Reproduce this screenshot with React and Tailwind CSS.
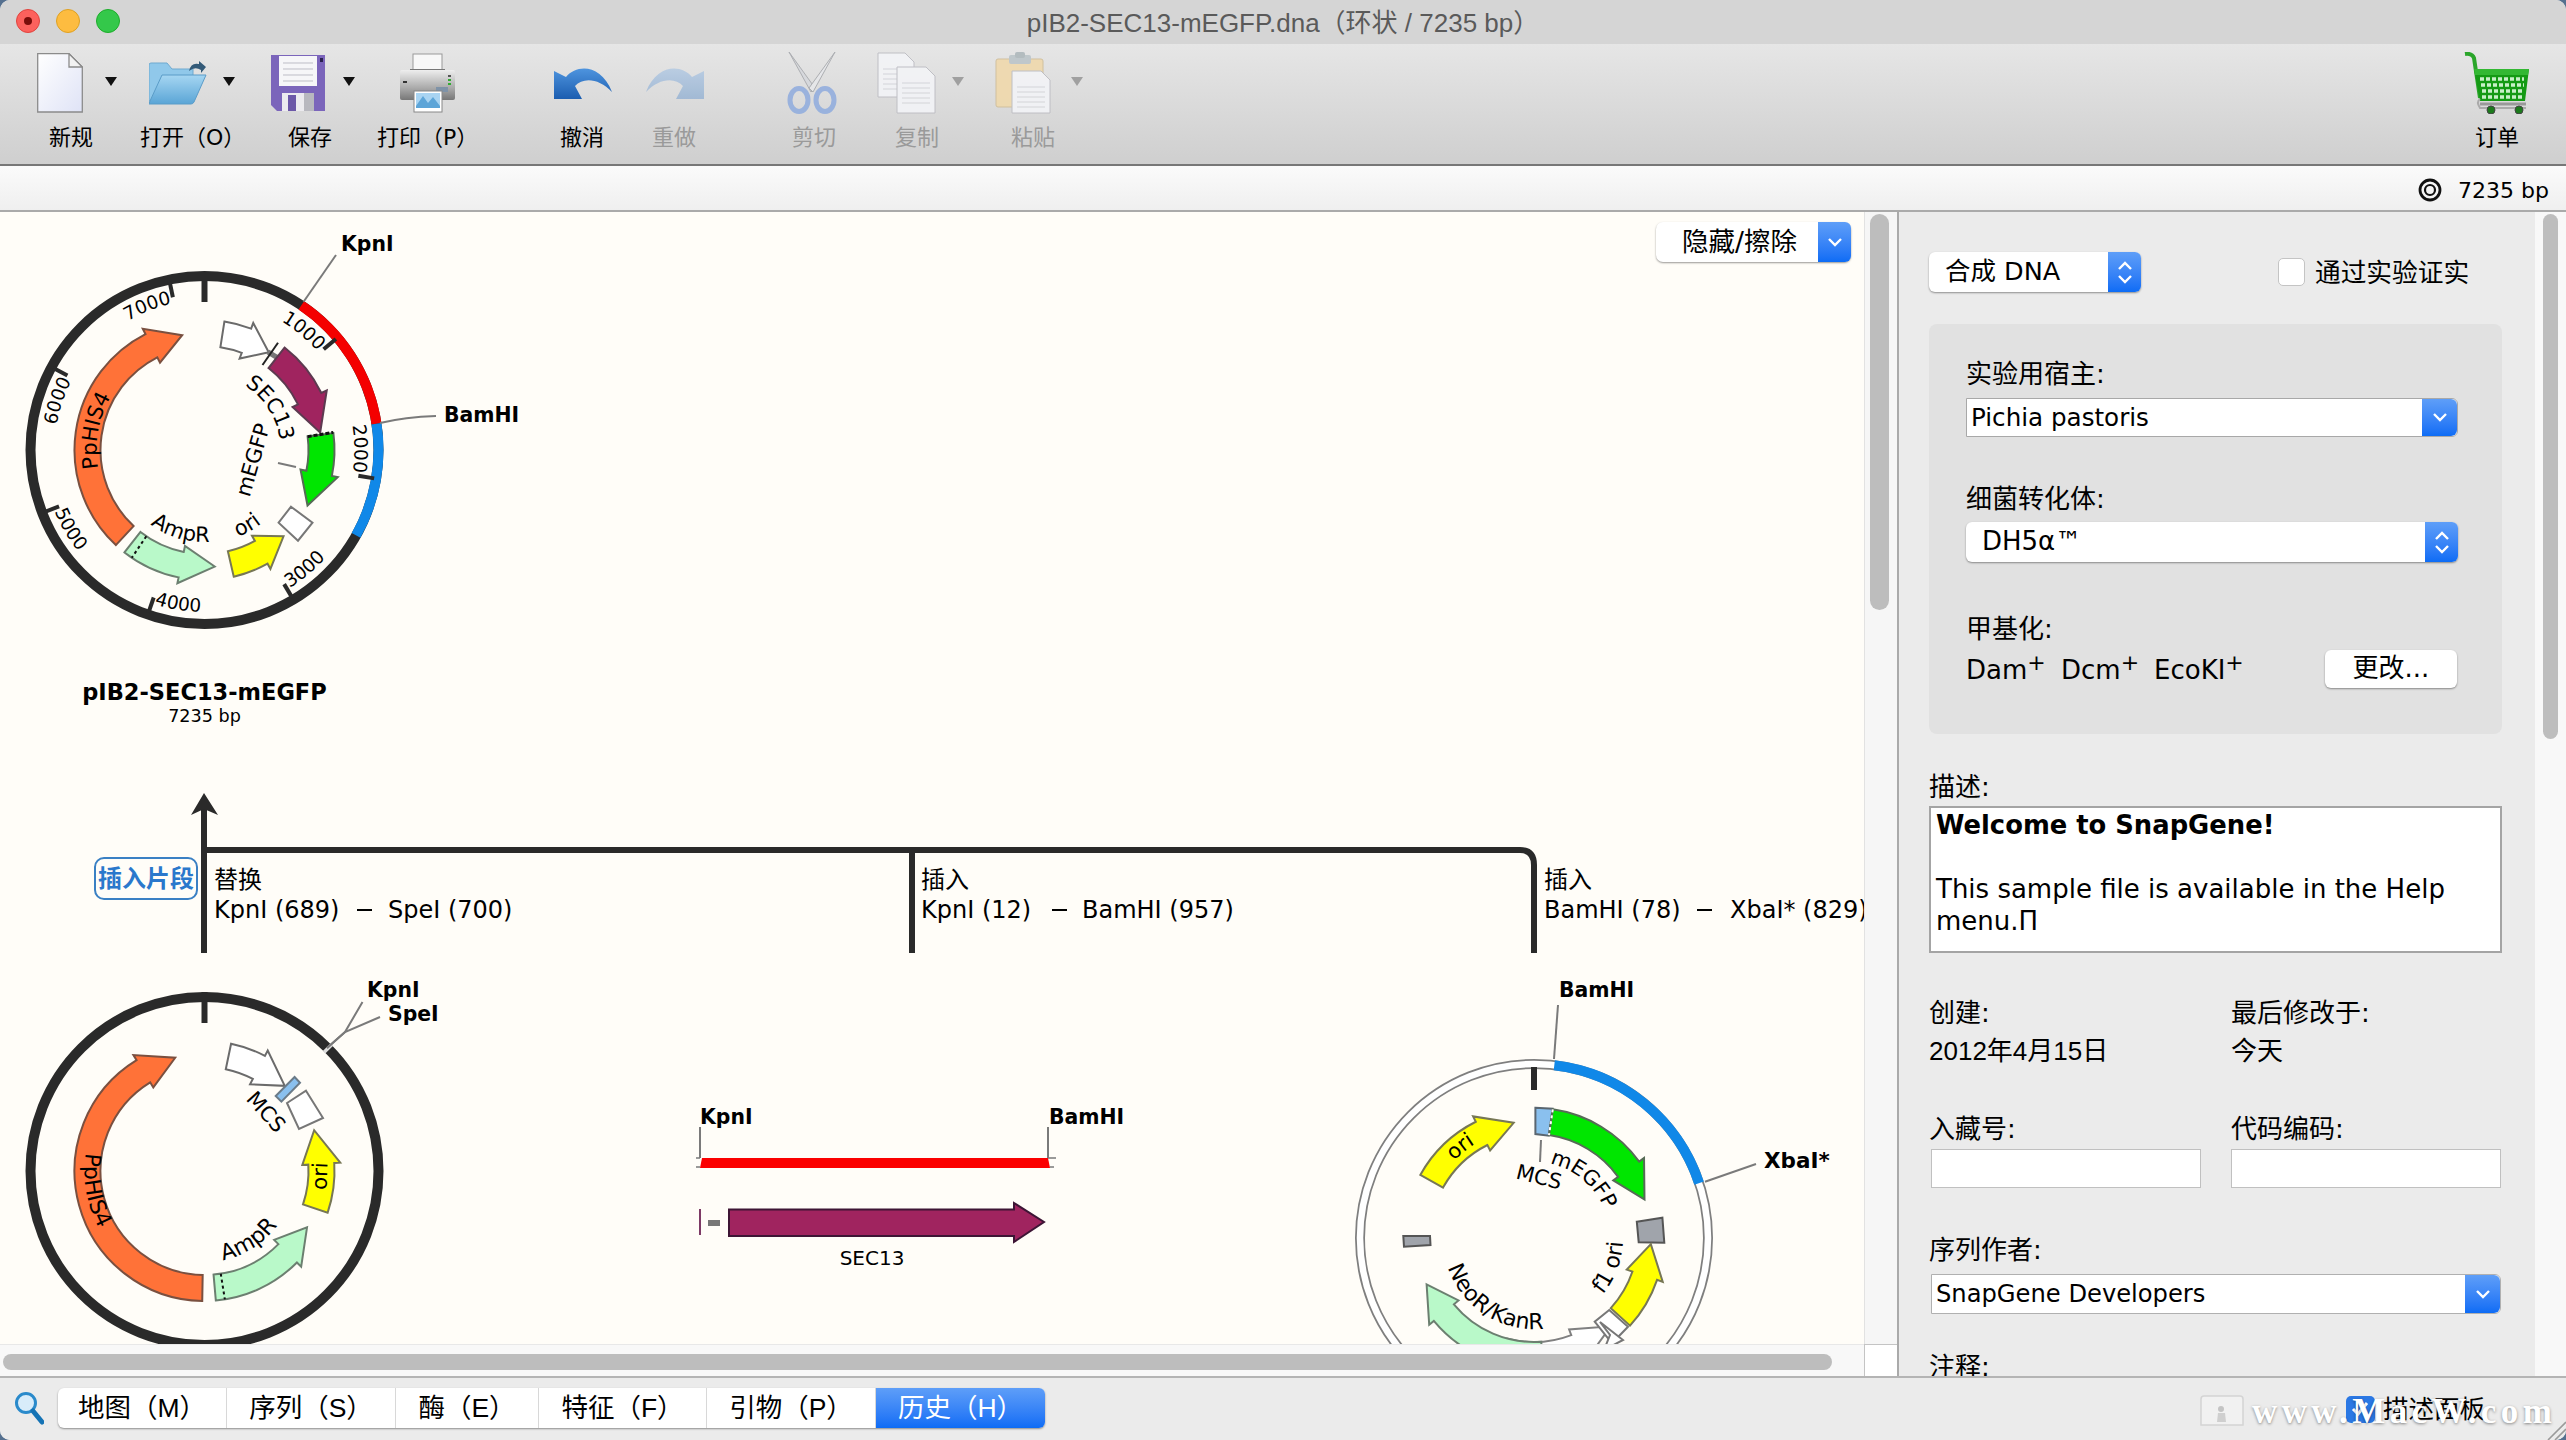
import React from "react";

const rad = (a) => (a * Math.PI) / 180;
const pt = (cx, cy, r, a) => [cx + r * Math.sin(rad(a)), cy - r * Math.cos(rad(a))];
const f = (p) => `${p[0].toFixed(2)} ${p[1].toFixed(2)}`;
const arcD = (cx, cy, r, a0, a1) => {
  const large = Math.abs(a1 - a0) > 180 ? 1 : 0;
  const sweep = a1 > a0 ? 1 : 0;
  return `M${f(pt(cx, cy, r, a0))} A${r} ${r} 0 ${large} ${sweep} ${f(pt(cx, cy, r, a1))}`;
};
const arrowD = (cx, cy, ro, ri, a0, tip, hs, wing = 6) => {
  const large = Math.abs(hs - a0) > 180 ? 1 : 0;
  const s = tip > a0 ? 1 : 0;
  const rm = (ro + ri) / 2;
  return (
    `M${f(pt(cx, cy, ro, a0))} A${ro} ${ro} 0 ${large} ${s} ${f(pt(cx, cy, ro, hs))}` +
    ` L${f(pt(cx, cy, ro + wing, hs))} L${f(pt(cx, cy, rm, tip))} L${f(pt(cx, cy, ri - wing, hs))} L${f(pt(cx, cy, ri, hs))}` +
    ` A${ri} ${ri} 0 ${large} ${1 - s} ${f(pt(cx, cy, ri, a0))} Z`
  );
};

const C = { orange: "#ff7238", purple: "#a0245f", green: "#00e600", yellow: "#ffff00", mint: "#b9f9c9", white: "#ffffff" };
const Feat = ({ c, fill, stroke = "#6b6b6b", a }) => (
  <path d={arrowD(c[0], c[1], 130, 104, a[0], a[1], a[2])} fill={fill} stroke={stroke} strokeWidth="2" strokeLinejoin="miter" />
);
const ArcText = ({ c, r, a0, a1, size = 21, anchor = "middle", children, fill = "#000" }) => {
  const id = `arc-${Math.round(c[0])}-${Math.round(c[1])}-${Math.round(a0)}-${Math.round(a1)}-${r}`;
  const off = anchor === "middle" ? "50%" : anchor === "end" ? "100%" : "0%";
  return (
    <>
      <path id={id} d={arcD(c[0], c[1], r, a0, a1)} fill="none" stroke="none" />
      <text fontSize={size} fill={fill}>
        <textPath href={`#${id}`} startOffset={off} textAnchor={anchor}>{children}</textPath>
      </text>
    </>
  );
};
const Poly = ({ p, fill = "#fff", stroke = "#777", w = 2 }) => <polygon points={p} fill={fill} stroke={stroke} strokeWidth={w} />;
const Bold = ({ x, y, children, size = 20.4 }) => (
  <text x={x} y={y} fontSize={size} fontWeight="700" dominantBaseline="central" fill="#000">{children}</text>
);
const Ln = ({ d, s = "#7a7a7a", w = 2 }) => <path d={d} fill="none" stroke={s} strokeWidth={w} />;

function Plasmid1() {
  const c = [204.5, 450];
  const ticks = [[49.8, "1000", 1], [99.5, "2000", 1], [149.3, "3000", 0], [199, "4000", 0], [248.8, "5000", 0], [298.5, "6000", 1], [348.3, "7000", 1]];
  return (
    <g>
      <circle cx={c[0]} cy={c[1]} r="174" fill="none" stroke="#2a2a2a" strokeWidth="10" />
      <path d={arcD(c[0], c[1], 174, 33.8, 81.3)} fill="none" stroke="#f40000" strokeWidth="10" />
      <path d={arcD(c[0], c[1], 174, 81.3, 119.4)} fill="none" stroke="#1088e8" strokeWidth="10" />
      <Ln d="M204.5 272V302" s="#2a2a2a" w="6" />
      {ticks.map(([a, t, cw]) => (
        <g key={t}>
          <Ln d={`M${f(pt(c[0], c[1], 172, a))} L${f(pt(c[0], c[1], 156, a))}`} s="#2a2a2a" w="4" />
          {cw ? (
            <ArcText c={c} r={150} a0={a - 60} a1={a - 1} size={18.5} anchor="end">{t}</ArcText>
          ) : (
            <ArcText c={c} r={162} a0={a - 1} a1={a - 60} size={18.5} anchor="start">{t}</ArcText>
          )}
        </g>
      ))}
      <Feat c={c} fill={C.orange} stroke="#7a5040" a={[223, 349, 333]} />
      <Feat c={c} fill={C.white} a={[8.8, 33.3, 21]} />
      <Ln d="M268 352L278 358" s="#777" w="5" />
      <Ln d="M278 342.7L262.5 365" s="#222" w="2" />
      <Feat c={c} fill={C.purple} stroke="#5d3a50" a={[38, 81.4, 64]} />
      <Feat c={c} fill={C.green} stroke="#566b56" a={[82.5, 118.3, 101.5]} />
      <path d={`M${f(pt(c[0], c[1], 104, 82.6))} L${f(pt(c[0], c[1], 130, 82.2))}`} stroke="#111" strokeWidth="3" strokeDasharray="4 2" />
      <Poly p="291,506.7 312.5,522.7 298,540.7 278.6,522.7" />
      <Feat c={c} fill={C.yellow} stroke="#777755" a={[167, 137.5, 151]} />
      <Feat c={c} fill={C.mint} stroke="#6c7f70" a={[218, 175, 191.5]} />
      <path d={`M${f(pt(c[0], c[1], 104, 214))} L${f(pt(c[0], c[1], 130, 214))}`} stroke="#111" strokeWidth="2" strokeDasharray="3 3" />
      <ArcText c={c} r={108} a0={215} a1={345}>PpHIS4</ArcText>
      <ArcText c={c} r={76} a0={0} a1={115}>SEC13</ArcText>
      <text transform="translate(253 460) rotate(-74)" fontSize="21" textAnchor="middle" dominantBaseline="central">mEGFP</text>
      <ArcText c={c} r={92} a0={240} a1={153}>AmpR</ArcText>
      <ArcText c={c} r={93} a0={195} a1={106}>ori</ArcText>
      <Ln d="M278 463L296 467" />
      <Ln d="M303.6 301.7L336 255" />
      <Ln d="M380 423Q405 417 436 416" />
      <Bold x={341} y={244}>KpnI</Bold>
      <Bold x={444} y={415}>BamHI</Bold>
      <text x={204.5} y={692} fontSize="22.5" fontWeight="700" textAnchor="middle" dominantBaseline="central">pIB2-SEC13-mEGFP</text>
      <text x={204.5} y={716} fontSize="17.6" textAnchor="middle" dominantBaseline="central">7235 bp</text>
    </g>
  );
}

function Plasmid2() {
  const c = [204.5, 1171];
  return (
    <g>
      <circle cx={c[0]} cy={c[1]} r="174" fill="none" stroke="#2a2a2a" strokeWidth="10" />
      <Ln d="M204.5 992V1023" s="#2a2a2a" w="6" />
      <path d={arcD(c[0], c[1], 174, 44.6, 45.8)} fill="none" stroke="#ddd" strokeWidth="11" />
      <Ln d="M327 1048L345 1032L362.5 1002" />
      <Ln d="M327 1048L345 1032L380 1017" />
      <Bold x={367} y={990}>KpnI</Bold>
      <Bold x={388} y={1014}>SpeI</Bold>
      <Feat c={c} fill={C.orange} stroke="#7a5040" a={[181, 345.5, 328.5]} />
      <Feat c={c} fill={C.white} a={[11.8, 43.3, 27.7]} />
      <Poly p="294.6,1077 300,1082.7 281.4,1101.7 275.7,1096" fill="#8ac0ee" stroke="#6b7b88" />
      <Poly p="306,1090.7 323,1118 299,1129 287,1103" />
      <text transform="translate(266 1112) rotate(48)" fontSize="21" textAnchor="middle" dominantBaseline="central">MCS</text>
      <Feat c={c} fill={C.yellow} stroke="#777755" a={[108.7, 69.6, 86.5]} />
      <text transform="translate(320 1176) rotate(-88)" fontSize="21" textAnchor="middle" dominantBaseline="central">ori</text>
      <Feat c={c} fill={C.mint} stroke="#6c7f70" a={[175, 118.8, 134.7]} />
      <path d={`M${f(pt(c[0], c[1], 104, 171))} L${f(pt(c[0], c[1], 130, 171))}`} stroke="#111" strokeWidth="2" strokeDasharray="3 3" />
      <ArcText c={c} r={120} a0={325} a1={195} size={22}>PpHIS4</ArcText>
      <ArcText c={c} r={91} a0={195} a1={100} size={22}>AmpR</ArcText>
    </g>
  );
}

function Plasmid3() {
  const c = [1534, 1238];
  return (
    <g>
      <circle cx={c[0]} cy={c[1]} r="174" fill="none" stroke="#7f7f7f" strokeWidth="10" />
      <circle cx={c[0]} cy={c[1]} r="174" fill="none" stroke="#ffffff" strokeWidth="6.5" />
      <path d={arcD(c[0], c[1], 174, 6.7, 71.6)} fill="none" stroke="#1088e8" strokeWidth="10" />
      <Ln d="M1534 1067V1090" s="#2a2a2a" w="6" />
      <Ln d="M1554 1059L1558 1005" />
      <Ln d="M1705 1181.7L1756 1164" />
      <Bold x={1559} y={990}>BamHI</Bold>
      <Bold x={1764} y={1160} size={21.5}>XbaI*</Bold>
      <Poly p="1535.4,1107.7 1552.6,1108.7 1548.8,1135.7 1535.4,1134" fill="#8ac0ee" stroke="#5a6670" />
      <Feat c={c} fill={C.green} stroke="#566b56" a={[8.3, 70.8, 54]} />
      <path d={`M${f(pt(c[0], c[1], 130, 8.3))} L${f(pt(c[0], c[1], 104, 8.3))}`} stroke="#fff" strokeWidth="2" strokeDasharray="3 3" />
      <Ln d="M1541 1140L1540 1162" />
      <text transform="translate(1539 1177) rotate(14)" fontSize="21" textAnchor="middle" dominantBaseline="central">MCS</text>
      <ArcText c={c} r={76} a0={-5} a1={85}>mEGFP</ArcText>
      <Feat c={c} fill={C.yellow} stroke="#777755" a={[299, 350, 333.4]} />
      <ArcText c={c} r={111} a0={275} a1={367}>ori</ArcText>
      <Poly p="1636.8,1221.7 1662.4,1217.7 1664.3,1242.7 1638.7,1242.3" fill="#a0a4ab" stroke="#555" />
      <Poly p="1403.3,1236 1430,1236 1430.5,1245 1404,1246.7" fill="#a0a4ab" stroke="#555" />
      <Feat c={c} fill={C.yellow} stroke="#777755" a={[132.4, 93, 108.8]} />
      <ArcText c={c} r={89} a0={160} a1={62} size={22}>f1 ori</ArcText>
      <path d={arrowD(c[0], c[1], 130, 104, 195, 139, 159, 6)} fill="#fff" stroke="#808080" strokeWidth="2" />
      <Poly p="1609.2,1310 1628,1326.7 1612,1343.3 1594.7,1321.7" />
      <Poly p="1600,1322 1623,1340 1604,1350 1610,1335" />
      <Feat c={c} fill={C.mint} stroke="#6c7f70" a={[176, 246.6, 230.4]} />
      <ArcText c={c} r={91} a0={285} a1={140} size={22}>NeoR/KanR</ArcText>
    </g>
  );
}

function Middle() {
  return (
    <g>
      <Bold x={700} y={1117}>KpnI</Bold>
      <Bold x={1049} y={1117}>BamHI</Bold>
      <Ln d="M700 1127V1158M1048 1127V1158" />
      <Ln d="M696 1158H700M1048 1158H1056M696 1167H700M1050 1167H1054" w="1.5" />
      <polygon points="702,1158 1048,1158 1050,1168 700,1168" fill="#fb0000" />
      <Ln d="M700 1209V1235" s="#7d3a66" w="2" />
      <rect x="708" y="1220" width="12" height="6" fill="#777" />
      <polygon points="729,1209.5 1014,1209.5 1014,1203 1044,1222 1014,1242 1014,1236 729,1236" fill="#a0245f" stroke="#3d1535" strokeWidth="2" />
      <text x={872} y={1258} fontSize="20" textAnchor="middle" dominantBaseline="central">SEC13</text>
    </g>
  );
}

function Tree() {
  const dash = (x1, x2, y) => <path d={`M${x1} ${y}H${x2}`} stroke="#000" strokeWidth="2" />;
  const T = ({ x, y, children }) => <text x={x} y={y} fontSize="24" dominantBaseline="central">{children}</text>;
  return (
    <g>
      <path d="M204 953V808" stroke="#2a2a2a" strokeWidth="6" fill="none" />
      <polygon points="204,793 218,815 204,809 191,815" fill="#2a2a2a" />
      <path d="M204 850H1520Q1534 850 1534 865V953" stroke="#2a2a2a" strokeWidth="6" fill="none" />
      <path d="M912 850V953" stroke="#2a2a2a" strokeWidth="6" fill="none" />
      <rect x="95" y="858" width="102" height="41" rx="9" fill="#fffdf8" stroke="#3a80c4" strokeWidth="2" />
      <text x="146" y="879" fontSize="24" fontWeight="700" fill="#2a78cc" textAnchor="middle" dominantBaseline="central">插入片段</text>
      <T x={214} y={880}>替换</T>
      <T x={214} y={910}>KpnI (689)</T>
      {dash(357, 372, 910)}
      <T x={388} y={910}>SpeI (700)</T>
      <T x={921} y={880}>插入</T>
      <T x={921} y={910}>KpnI (12)</T>
      {dash(1052, 1067, 910)}
      <T x={1082} y={910}>BamHI (957)</T>
      <T x={1544} y={880}>插入</T>
      <T x={1544} y={910}>BamHI (78)</T>
      {dash(1697, 1712, 910)}
      <T x={1730} y={910}>XbaI* (829)</T>
    </g>
  );
}

/* ---------- toolbar icons ---------- */
const IDoc = () => (
  <svg width="46" height="60" viewBox="0 0 46 60">
    <defs><linearGradient id="dg" x1="0" y1="0" x2="1" y2="1"><stop offset="0" stopColor="#fff" /><stop offset="1" stopColor="#dfe3f6" /></linearGradient></defs>
    <path d="M.7 .7H32L45.3 14V59H.7Z" fill="url(#dg)" stroke="#8b8b8b" strokeWidth="1.3" />
    <path d="M32 .7V14H45.3Z" fill="#f2f2f2" stroke="#8b8b8b" strokeWidth="1.3" />
  </svg>
);
const IFolder = () => (
  <svg width="58" height="44" viewBox="0 0 58 44">
    <defs><linearGradient id="fg" x1="0" y1="0" x2="0" y2="1"><stop offset="0" stopColor="#a6d6f2" /><stop offset="1" stopColor="#5aa5d6" /></linearGradient></defs>
    <path d="M0 4Q0 2 2 2H18L23 8H44V40H0Z" fill="#90c8ea" stroke="#6fa9cf" />
    <path d="M13 14H57L45 41Q44 43 42 43H0L1 40Z" fill="url(#fg)" stroke="#5b9cc8" />
    <path d="M40 10Q42 1 50 3L50 0L57 6L52 12L52 9Q46 5 40 10Z" fill="#335a78" />
  </svg>
);
const ISave = () => (
  <svg width="54" height="56" viewBox="0 0 54 56">
    <path d="M0 0H54V56H6L0 50Z" fill="#7b65bb" />
    <rect x="8" y="1" width="38" height="30" fill="#f6f6f8" />
    <path d="M12 8H42M12 14H42M12 20H42M12 26H42" stroke="#bdbdc6" strokeWidth="1" />
    <rect x="49" y="3" width="3" height="4" fill="#2a2050" />
    <rect x="11" y="38" width="32" height="18" fill="#ecebef" />
    <rect x="17" y="40" width="8" height="16" fill="#6c58a8" />
    <rect x="33" y="38" width="10" height="18" fill="#b8b8bf" />
  </svg>
);
const IPrinter = () => (
  <svg width="55" height="60" viewBox="0 0 55 60">
    <defs><linearGradient id="pg" x1="0" y1="0" x2="0" y2="1"><stop offset="0" stopColor="#eeeeee" /><stop offset=".6" stopColor="#aaaaaa" /><stop offset="1" stopColor="#777" /></linearGradient></defs>
    <rect x="13" y="1" width="29" height="16" fill="#f8f8f8" stroke="#999" />
    <path d="M10 16H45V20H10Z" fill="#777" />
    <rect x="0" y="17" width="55" height="30" rx="2" fill="url(#pg)" />
    <rect x="3" y="28" width="4" height="2" fill="#333" />
    <rect x="48" y="22" width="3" height="2" fill="#555" /><rect x="48" y="26" width="3" height="2" fill="#3a3" /><rect x="48" y="30" width="3" height="2" fill="#3a3" />
    <rect x="36" y="34" width="12" height="5" fill="#7f93a8" />
    <rect x="14" y="38" width="28" height="21" fill="#fff" stroke="#888" />
    <rect x="16" y="40" width="24" height="15" fill="#a9d4f2" />
    <path d="M16 53L23 43L28 50L33 44L40 53V55H16Z" fill="#5da5d8" />
  </svg>
);
const IUndo = ({ redo, c1, c2, id }) => (
  <svg width="60" height="34" viewBox="0 0 60 34" style={redo ? { transform: "scaleX(-1)" } : undefined}>
    <defs><linearGradient id={id} x1="0" y1="0" x2="0" y2="1"><stop offset="0" stopColor={c1} /><stop offset="1" stopColor={c2} /></linearGradient></defs>
    <path d="M1 5L13 11C24 -2 48 -2 59 26C46 12 30 11 22 20L29 33H1Z" fill={`url(#${id})`} />
  </svg>
);
const IScissors = () => (
  <svg width="56" height="62" viewBox="0 0 56 62">
    <path d="M4 0L30 36L26 40Z" fill="#d6d8dc" stroke="#a7a9ad" />
    <path d="M50 0L24 36L28 40Z" fill="#e6e7ea" stroke="#a7a9ad" />
    <ellipse cx="14" cy="48" rx="9" ry="11.5" fill="none" stroke="#93aede" strokeWidth="5" />
    <ellipse cx="40" cy="48" rx="9" ry="11.5" fill="none" stroke="#93aede" strokeWidth="5" />
  </svg>
);
const IPage = ({ x, y, w, h }) => (
  <g>
    <path d={`M${x} ${y}H${x + w - 9}L${x + w} ${y + 9}V${y + h}H${x}Z`} fill="#f3f4f7" stroke="#bcbcc2" />
    <path d={`M${x + 5} ${y + 16}H${x + w - 5}M${x + 5} ${y + 21}H${x + w - 5}M${x + 5} ${y + 26}H${x + w - 5}M${x + 5} ${y + 31}H${x + w - 5}M${x + 5} ${y + 36}H${x + w - 5}`} stroke="#d2d3d8" />
  </g>
);
const ICopy = () => (
  <svg width="60" height="62" viewBox="0 0 60 62">
    <IPage x={1} y={1} w={36} h={44} />
    <IPage x={20} y={15} w={38} h={46} />
  </svg>
);
const IPaste = () => (
  <svg width="58" height="62" viewBox="0 0 58 62">
    <rect x="1" y="7" width="47" height="48" rx="2" fill="#f0d9ac" stroke="#cfbd98" />
    <rect x="14" y="3" width="22" height="9" rx="2" fill="#bcc5c9" />
    <rect x="20" y="0" width="10" height="6" rx="2" fill="#aeb8bc" />
    <IPage x={17} y={19} w={38} h={42} />
  </svg>
);
const ICart = () => (
  <svg width="66" height="62" viewBox="0 0 66 62">
    <path d="M1 2Q8 1 10 6L16 46" fill="none" stroke="#2aa52a" strokeWidth="4" />
    <path d="M10 17H65L61 49H16Z" fill="#149a14" />
    <path d="M10 17H65L64 23H11Z" fill="#33b833" />
    <path d="M16 27H60M17 33H60M18 39H60M18 45H59" stroke="#c8f0c8" strokeWidth="3.5" strokeDasharray="4 2" />
    <path d="M16 52H62" stroke="#999" strokeWidth="3" />
    <path d="M16 47Q12 50 16 56H62" fill="none" stroke="#aaa" strokeWidth="2" />
    <circle cx="27" cy="58" r="4" fill="#1c7a1c" stroke="#444" />
    <circle cx="55" cy="58" r="4" fill="#1c7a1c" stroke="#444" />
  </svg>
);
const Caret = ({ dim }) => (
  <svg width="12" height="9" viewBox="0 0 12 9" className="shrink-0"><path d="M0 0H12L6 9Z" fill={dim ? "#9a9a9a" : "#111"} /></svg>
);

/* ---------- form bits ---------- */
const Chev = ({ up }) => (
  <svg width="16" height="9" viewBox="0 0 16 9"><path d={up ? "M2 8L8 2L14 8" : "M2 1L8 7L14 1"} fill="none" stroke="#fff" strokeWidth="2.4" /></svg>
);
const Blue = ({ w, double }) => (
  <div className={`${w} h-full shrink-0 flex flex-col items-center justify-center gap-[5px] rounded-r-[6px] bg-gradient-to-b from-[#5e9ef8] to-[#0c6cf5]`}>
    {double ? <Chev up /> : null}
    <Chev />
  </div>
);

export default function App() {
  const tools = [
    { w: "w-[114px]", pl: "pl-[23px]", icon: <IDoc />, cm: "ml-[22px]", caret: 1, label: "新规" },
    { w: "w-[112px]", pl: "pl-[21px]", icon: <IFolder />, cm: "ml-[16px]", caret: 1, label: "打开（O）", lb: "pl-[12px]" },
    { w: "w-[140px]", pl: "pl-[31px]", icon: <ISave />, cm: "ml-[18px]", caret: 1, label: "保存" },
    { w: "w-[80px]", pl: "pl-[20px]", icon: <IPrinter />, label: "打印（P）", mr: "mr-[78px]", lb: "-translate-x-[3px]" },
    { w: "w-[88px]", pl: "pl-[15px]", icon: <IUndo c1="#4e94de" c2="#1b5db0" id="ug1" />, label: "撤消" },
    { w: "w-[96px]", pl: "pl-[19px]", icon: <IUndo redo c1="#b6cbe2" c2="#9cb6d4" id="ug2" />, label: "重做", dim: 1, mr: "mr-[50px]" },
    { w: "w-[84px]", pl: "pl-[13px]", icon: <IScissors />, label: "剪切", dim: 1 },
    { w: "w-[122px]", pl: "pl-[21px]", icon: <ICopy />, cm: "ml-[15px]", caret: 1, label: "复制", dim: 1 },
    { w: "w-[110px]", pl: "pl-[17px]", icon: <IPaste />, cm: "ml-[18px]", caret: 1, label: "粘贴", dim: 1 },
  ];
  const tabs = [
    ["地图（M）", "w-[169px]"],
    ["序列（S）", "w-[169px]"],
    ["酶（E）", "w-[143px]"],
    ["特征（F）", "w-[168px]"],
    ["引物（P）", "w-[169px]"],
  ];
  const label = "h-[30px] leading-[32px] text-[26px] text-black whitespace-nowrap";
  return (
    <div className="w-[2566px] h-[1440px] bg-[#55708f]">
      <div className="w-full h-full rounded-[10px] overflow-hidden flex flex-col relative bg-[#ebebeb] font-['DejaVu_Sans','Noto_Sans_CJK_SC',sans-serif]">
        {/* title bar */}
        <div className="h-[44px] shrink-0 relative flex items-center justify-center pt-[2px] bg-[#d5d5d5] text-[#5a5a5a] text-[26px] font-['Liberation_Sans','Noto_Sans_CJK_SC',sans-serif]">
          <div className="absolute left-[16px] top-[9px] flex gap-[16px]">
            <div className="w-[24px] h-[24px] rounded-full bg-[#fc615d] border border-[#e0443e] flex items-center justify-center"><div className="w-[8px] h-[8px] rounded-full bg-[#7a0d0a]" /></div>
            <div className="w-[24px] h-[24px] rounded-full bg-[#fdbc40] border border-[#dea123]" />
            <div className="w-[24px] h-[24px] rounded-full bg-[#34c84a] border border-[#1dad2b]" />
          </div>
          <span>pIB2-SEC13-mEGFP.dna（环状 / 7235 bp）</span>
        </div>
        {/* toolbar */}
        <div className="h-[122px] shrink-0 flex pl-[14px] pr-[36px] border-b-2 border-[#777] bg-gradient-to-b from-[#e6e6e6] to-[#cfcfcf]">
          {tools.map((t) => (
            <div key={t.label} className={`${t.w} ${t.mr || ""} shrink-0 flex flex-col`}>
              <div className={`h-[78px] shrink-0 flex items-center ${t.pl} ${t.dim ? "opacity-90" : ""}`}>
                <div className="shrink-0">{t.icon}</div>
                {t.caret ? <div className={`${t.cm} -mt-[4px]`}><Caret dim={t.dim} /></div> : null}
              </div>
              <div className={`text-center text-[22px] leading-[28px] mt-[2px] whitespace-nowrap ${t.lb || ""} ${t.dim ? "text-[#9a9a9a]" : "text-black"}`}>{t.label}</div>
            </div>
          ))}
          <div className="ml-auto w-[66px] flex flex-col items-center">
            <div className="h-[78px] flex items-center"><ICart /></div>
            <div className="text-center text-[22px] leading-[28px] mt-[2px] text-black">订单</div>
          </div>
        </div>
        {/* sub bar */}
        <div className="h-[46px] shrink-0 flex items-center justify-end pt-[4px] pr-[17px] gap-[16px] border-b-2 border-[#aaaaaa] bg-gradient-to-b from-[#fbfbfb] to-[#efefef]">
          <svg width="24" height="24" viewBox="0 0 24 24"><circle cx="12" cy="12" r="10" fill="none" stroke="#111" strokeWidth="2.8" /><circle cx="12" cy="12" r="5" fill="none" stroke="#111" strokeWidth="2.2" /></svg>
          <span className="text-[22px] text-black">7235 bp</span>
        </div>
        {/* main */}
        <div className="h-[1166px] shrink-0 flex border-b-2 border-[#b4b4b4]">
          <div className="w-[1897px] shrink-0 flex flex-col">
            <div className="h-[1132px] shrink-0 flex">
              <div className="w-[1864px] h-full shrink-0 relative overflow-hidden bg-[#fffdf8]">
                <svg width="1864" height="1132" viewBox="0 212 1864 1132" className="block font-['DejaVu_Sans','Noto_Sans_CJK_SC',sans-serif]">
                  <Plasmid1 />
                  <Tree />
                  <Plasmid2 />
                  <Middle />
                  <Plasmid3 />
                </svg>
                <div className="absolute left-[1656px] top-[10px] w-[195px] h-[40px] rounded-[7px] bg-white shadow-[0_1px_2px_rgba(0,0,0,0.4)] flex">
                  <div className="flex-1 pl-[5px] text-center text-[26.5px] leading-[40px] text-black">隐藏/擦除</div>
                  <Blue w="w-[33px]" />
                </div>
              </div>
              <div className="w-[33px] shrink-0 h-full bg-[#f6f6f6] border-l border-[#e2e2e2] pl-[5px] pt-[2px]">
                <div className="w-[19px] h-[396px] rounded-full bg-[#bdbdbd]" />
              </div>
            </div>
            <div className="h-[32px] shrink-0 flex bg-[#f8f8f8]">
              <div className="w-[1864px] shrink-0 pl-[3px] pt-[9px] border-t border-[#e8e8e8]">
                <div className="w-[1829px] h-[16px] rounded-full bg-[#bdbdbd]" />
              </div>
              <div className="w-[33px] shrink-0 bg-white border-l border-t border-[#c4c4c4]" />
            </div>
          </div>
          {/* right panel */}
          <div className="w-[638px] shrink-0 border-l-2 border-[#aaaaaa] bg-[#ebebeb] pl-[30px] pt-[40px] overflow-hidden">
            <div className="w-[573px]">
              <div className="h-[40px] flex items-center">
                <div className="w-[212px] h-[40px] rounded-[6px] bg-white shadow-[0_1px_2px_rgba(0,0,0,0.4)] flex">
                  <div className="flex-1 pl-[16px] text-[25.5px] leading-[38px] text-black whitespace-nowrap">合成 DNA</div>
                  <Blue w="w-[33px]" double />
                </div>
                <div className="ml-[137px] w-[27px] h-[28px] rounded-[5px] bg-white border border-[#c4c4c4]" />
                <div className="ml-[10px] pt-[2px] text-[25.7px] text-black whitespace-nowrap">通过实验证实</div>
              </div>
              <div className="mt-[32px] h-[410px] rounded-[8px] bg-[#e1e1e1] pl-[37px] pr-[44px] pt-[34px]">
                <div className={label}>实验用宿主:</div>
                <div className="mt-[10px] h-[39px] bg-white border border-[#a8a8a8] rounded-r-[6px] flex">
                  <div className="flex-1 pl-[4px] text-[24.6px] leading-[38px] text-black">Pichia pastoris</div>
                  <Blue w="w-[35px]" />
                </div>
                <div className={`${label} mt-[46px]`}>细菌转化体:</div>
                <div className="mt-[9px] h-[40px] bg-white rounded-[6px] shadow-[0_1px_2px_rgba(0,0,0,0.4)] flex">
                  <div className="flex-1 pl-[16px] text-[26px] leading-[38px] text-black">DH5α™</div>
                  <Blue w="w-[33px]" double />
                </div>
                <div className={`${label} mt-[51px]`}>甲基化:</div>
                <div className="mt-[7px] h-[38px] flex items-center text-[26px] text-black">
                  <div className="w-[95px] pt-[2px]">Dam<sup className="text-[22px] -top-[9px]">+</sup></div>
                  <div className="w-[93px] pt-[2px]">Dcm<sup className="text-[22px] -top-[9px]">+</sup></div>
                  <div className="w-[171px] pt-[2px]">EcoKI<sup className="text-[22px] -top-[9px]">+</sup></div>
                  <div className="w-[132px] h-[38px] rounded-[6px] bg-white shadow-[0_1px_2px_rgba(0,0,0,0.4)] text-center leading-[36px]">更改...</div>
                </div>
              </div>
              <div className={`${label} mt-[37px]`}>描述:</div>
              <div className="mt-[5px] h-[147px] border-2 border-[#a4a4a4] bg-white pl-[5px] pt-[1px] text-[26px] leading-[32px] text-black">
                <div className="font-bold text-[25.8px]">Welcome to SnapGene!</div>
                <div className="h-[32px]" />
                <div>This sample file is available in the Help<br />menu.Π</div>
              </div>
              <div className="mt-[44px] grid grid-cols-[302px_1fr]">
                <div className={label}>创建:</div>
                <div className={label}>最后修改于:</div>
                <div className={`${label} mt-[8px] font-['Liberation_Sans','Noto_Sans_CJK_SC',sans-serif]`}>2012年4月15日</div>
                <div className={`${label} mt-[8px]`}>今天</div>
                <div className={`${label} mt-[48px]`}>入藏号:</div>
                <div className={`${label} mt-[48px]`}>代码编码:</div>
                <div className="mt-[6px] ml-[2px] w-[270px] h-[39px] bg-white border border-[#c0c0c0]" />
                <div className="mt-[6px] w-[270px] h-[39px] bg-white border border-[#c0c0c0]" />
              </div>
              <div className={`${label} mt-[46px]`}>序列作者:</div>
              <div className="mt-[10px] ml-[2px] w-[570px] h-[40px] bg-white border border-[#b0b0b0] rounded-r-[6px] flex">
                <div className="flex-1 pl-[4px] text-[24.2px] leading-[38px] text-black">SnapGene Developers</div>
                <Blue w="w-[35px]" />
              </div>
              <div className={`${label} mt-[37px]`}>注释:</div>
            </div>
          </div>
          <div className="flex-1 bg-[#f8f8f8] pl-[8px] pt-[2px]">
            <div className="w-[15px] h-[525px] rounded-full bg-[#bdbdbd]" />
          </div>
        </div>
        {/* bottom bar */}
        <div className="flex-1 relative flex items-start pt-[10px] pl-[14px] bg-[#ebebeb]">
          <svg width="30" height="34" viewBox="0 0 30 34" className="mt-[3px] shrink-0">
            <circle cx="12" cy="12" r="9.5" fill="#d8ecfa" stroke="#2a8acb" strokeWidth="3" />
            <path d="M19 20L28 31" stroke="#1573b5" strokeWidth="5" strokeLinecap="round" />
          </svg>
          <div className="ml-[14px] h-[40px] flex rounded-[6px] bg-white shadow-[0_1px_2px_rgba(0,0,0,0.4)] text-[26.5px] text-black font-['Liberation_Sans','Noto_Sans_CJK_SC',sans-serif]">
            {tabs.map(([t, w]) => (
              <div key={t} className={`${w} h-full text-center leading-[40px] border-r border-[#d8d8d8] whitespace-nowrap`}>{t}</div>
            ))}
            <div className="w-[169px] h-full text-center leading-[40px] text-white rounded-r-[6px] bg-gradient-to-b from-[#5e9ef8] to-[#0c6cf5] whitespace-nowrap">历史（H）</div>
          </div>
          <div className="ml-auto mr-[81px] mt-[7px] flex items-center h-[28px] gap-[8px]">
            <div className="w-[29px] h-[27px] rounded-[5px] bg-[#2b78e4] flex items-center justify-center">
              <svg width="18" height="16" viewBox="0 0 18 16"><path d="M2 8L7 13L16 2" fill="none" stroke="#fff" strokeWidth="3" /></svg>
            </div>
            <div className="text-[25.5px] text-black whitespace-nowrap">描述面板</div>
          </div>
          <svg width="44" height="32" viewBox="0 0 44 32" className="absolute left-[2200px] top-[17px]">
            <path d="M1 4Q1 1 4 1H40Q43 1 43 4V30H1Z" fill="#f1f1f1" stroke="#d4d4d4" strokeWidth="1.5" />
            <circle cx="21" cy="14" r="3" fill="#c4c4c4" />
            <path d="M18 18H25L26 27H17Z" fill="#cfcfcf" />
          </svg>
          <div className="absolute left-[2252px] top-[14px] text-[35px] leading-[40px] font-bold tracking-[4.4px] text-white font-['Liberation_Serif',serif] [text-shadow:0_1px_3px_rgba(0,0,0,0.45)] whitespace-nowrap">www.MacW.com</div>
          <svg width="26" height="26" viewBox="0 0 26 26" className="absolute right-0 bottom-0">
            <path d="M8 26L26 8M15 26L26 15M22 26L26 22" stroke="#9a9a9a" strokeWidth="1.6" />
          </svg>
        </div>
      </div>
    </div>
  );
}
